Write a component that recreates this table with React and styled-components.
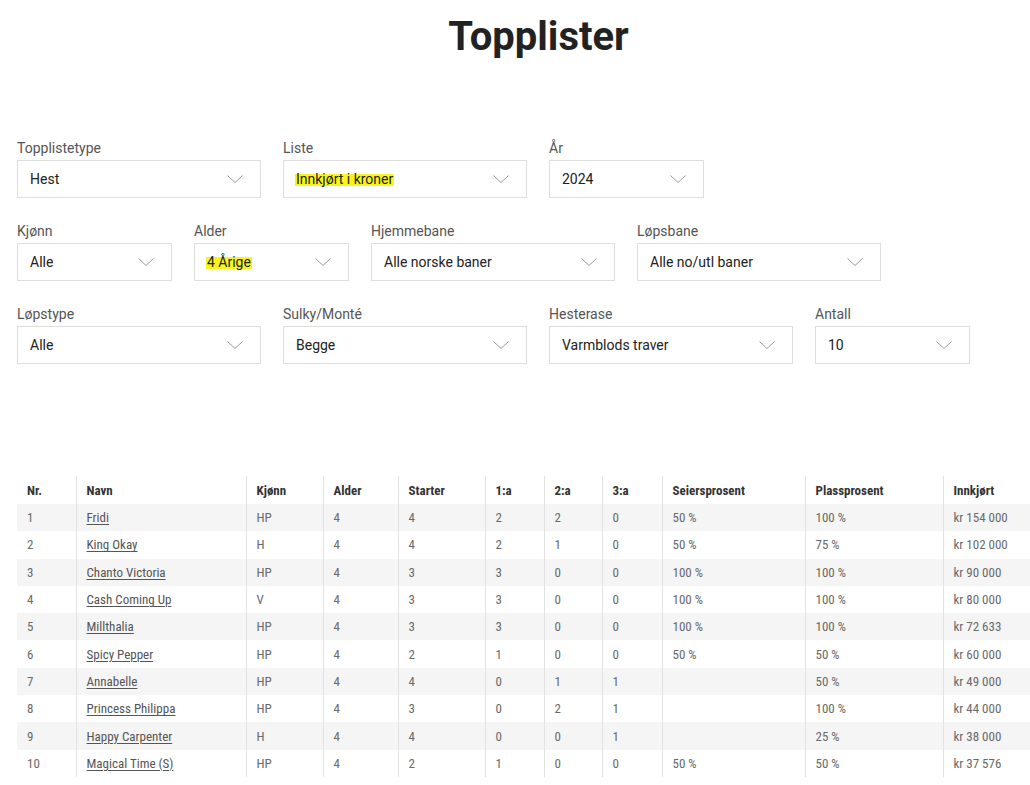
import React from "react";
import styled, { createGlobalStyle } from "styled-components";

const GlobalStyle = createGlobalStyle`
  html, body {
    margin: 0;
    padding: 0;
    background: #ffffff;
    overflow: hidden;
  }
  body {
    font-family: Roboto, "Liberation Sans", sans-serif;
    color: #222;
  }
`;

const Page = styled.div`
  width: 1043px;
  margin-left: 17px;
  padding-top: 13px;
`;

const Title = styled.h1`
  margin: 0;
  font-family: Roboto, "Liberation Sans", sans-serif;
  font-weight: 700;
  font-size: 40px;
  line-height: 48px;
  color: #222;
  text-align: center;
`;

const Filters = styled.div`
  margin-top: 79px;
  display: flex;
  flex-direction: column;
  gap: 25px;
`;

const FilterRow = styled.div`
  display: flex;
  gap: 22px;
`;

const Field = styled.div`
  width: ${(p) => (p.$wide ? "244px" : "155px")};
  display: flex;
  flex-direction: column;
  gap: 4px;
`;

const Label = styled.label`
  font-size: 14px;
  line-height: 16px;
  color: #555;
`;

const SelectBox = styled.div`
  box-sizing: border-box;
  height: 38px;
  border: 1px solid #dedede;
  background: #fff;
  display: flex;
  align-items: center;
  justify-content: space-between;
  padding: 0 17px 0 12px;
  font-size: 14px;
  color: #222;
`;

const Value = styled.span`
  white-space: nowrap;
`;

const Mark = styled.span`
  background: linear-gradient(
    to bottom,
    transparent 18%,
    #f9f51c 18%,
    #f9f51c 95%,
    transparent 95%
  );
  padding: 0 1px;
  margin-left: -1px;
  border-radius: 2px;
`;

const Chevron = () => (
  <svg width="16" height="8" viewBox="0 0 16 8" fill="none">
    <polyline points="0.5,0.5 8,7.5 15.5,0.5" stroke="#9a9a9a" strokeWidth="1" />
  </svg>
);

const Select = ({ label, value, wide, marked }) => (
  <Field $wide={wide}>
    <Label>{label}</Label>
    <SelectBox>
      <Value>{marked ? <Mark>{value}</Mark> : value}</Value>
      <Chevron />
    </SelectBox>
  </Field>
);

const TableWrap = styled.div`
  margin-top: 112px;
`;

const Table = styled.table`
  width: 1043px;
  border-collapse: collapse;
  table-layout: fixed;
  font-family: "Roboto Condensed", "Liberation Sans Narrow", Roboto, sans-serif;
  font-size: 13px;
`;

const Th = styled.th`
  height: 28px;
  padding: 0 0 0 10px;
  text-align: left;
  font-weight: 700;
  color: #333;
  border-left: ${(p) => (p.$first ? "none" : "1px solid #e2e2e2")};
  white-space: nowrap;
`;

const Tr = styled.tr`
  height: 27.3px;
  background: ${(p) => (p.$striped ? "#f5f5f5" : "#fff")};
`;

const Td = styled.td`
  padding: 0 0 0 10px;
  color: #6a6a6a;
  border-left: ${(p) => (p.$first ? "none" : "1px solid #e2e2e2")};
  white-space: nowrap;
`;

const HorseLink = styled.a`
  color: #555;
  text-decoration: underline;
  text-underline-offset: 2px;
  text-decoration-thickness: 1px;
`;

const columns = [
  ["Nr.", 59],
  ["Navn", 170],
  ["Kjønn", 77],
  ["Alder", 75],
  ["Starter", 87],
  ["1:a", 59],
  ["2:a", 58],
  ["3:a", 60],
  ["Seiersprosent", 143],
  ["Plassprosent", 138],
  ["Innkjørt", 117],
];

const rows = [
  [1, "Fridi", "HP", 4, 4, 2, 2, 0, "50 %", "100 %", "kr 154 000"],
  [2, "King Okay", "H", 4, 4, 2, 1, 0, "50 %", "75 %", "kr 102 000"],
  [3, "Chanto Victoria", "HP", 4, 3, 3, 0, 0, "100 %", "100 %", "kr 90 000"],
  [4, "Cash Coming Up", "V", 4, 3, 3, 0, 0, "100 %", "100 %", "kr 80 000"],
  [5, "Millthalia", "HP", 4, 3, 3, 0, 0, "100 %", "100 %", "kr 72 633"],
  [6, "Spicy Pepper", "HP", 4, 2, 1, 0, 0, "50 %", "50 %", "kr 60 000"],
  [7, "Annabelle", "HP", 4, 4, 0, 1, 1, "", "50 %", "kr 49 000"],
  [8, "Princess Philippa", "HP", 4, 3, 0, 2, 1, "", "100 %", "kr 44 000"],
  [9, "Happy Carpenter", "H", 4, 4, 0, 0, 1, "", "25 %", "kr 38 000"],
  [10, "Magical Time (S)", "HP", 4, 2, 1, 0, 0, "50 %", "50 %", "kr 37 576"],
];

export default function App() {
  return (
    <>
      <GlobalStyle />
      <Page>
        <Title>Topplister</Title>
        <Filters>
          <FilterRow>
            <Select label="Topplistetype" value="Hest" wide />
            <Select label="Liste" value="Innkjørt i kroner" wide marked />
            <Select label="År" value="2024" />
          </FilterRow>
          <FilterRow>
            <Select label="Kjønn" value="Alle" />
            <Select label="Alder" value="4 Årige" marked />
            <Select label="Hjemmebane" value="Alle norske baner" wide />
            <Select label="Løpsbane" value="Alle no/utl baner" wide />
          </FilterRow>
          <FilterRow>
            <Select label="Løpstype" value="Alle" wide />
            <Select label="Sulky/Monté" value="Begge" wide />
            <Select label="Hesterase" value="Varmblods traver" wide />
            <Select label="Antall" value="10" />
          </FilterRow>
        </Filters>
        <TableWrap>
          <Table>
            <colgroup>
              {columns.map(([name, w]) => (
                <col key={name} style={{ width: w }} />
              ))}
            </colgroup>
            <thead>
              <tr>
                {columns.map(([name], i) => (
                  <Th key={name} $first={i === 0}>
                    {name}
                  </Th>
                ))}
              </tr>
            </thead>
            <tbody>
              {rows.map((r, ri) => (
                <Tr key={r[0]} $striped={ri % 2 === 0}>
                  {r.map((cell, ci) => (
                    <Td key={ci} $first={ci === 0}>
                      {ci === 1 ? <HorseLink href="#">{cell}</HorseLink> : cell}
                    </Td>
                  ))}
                </Tr>
              ))}
            </tbody>
          </Table>
        </TableWrap>
      </Page>
    </>
  );
}
